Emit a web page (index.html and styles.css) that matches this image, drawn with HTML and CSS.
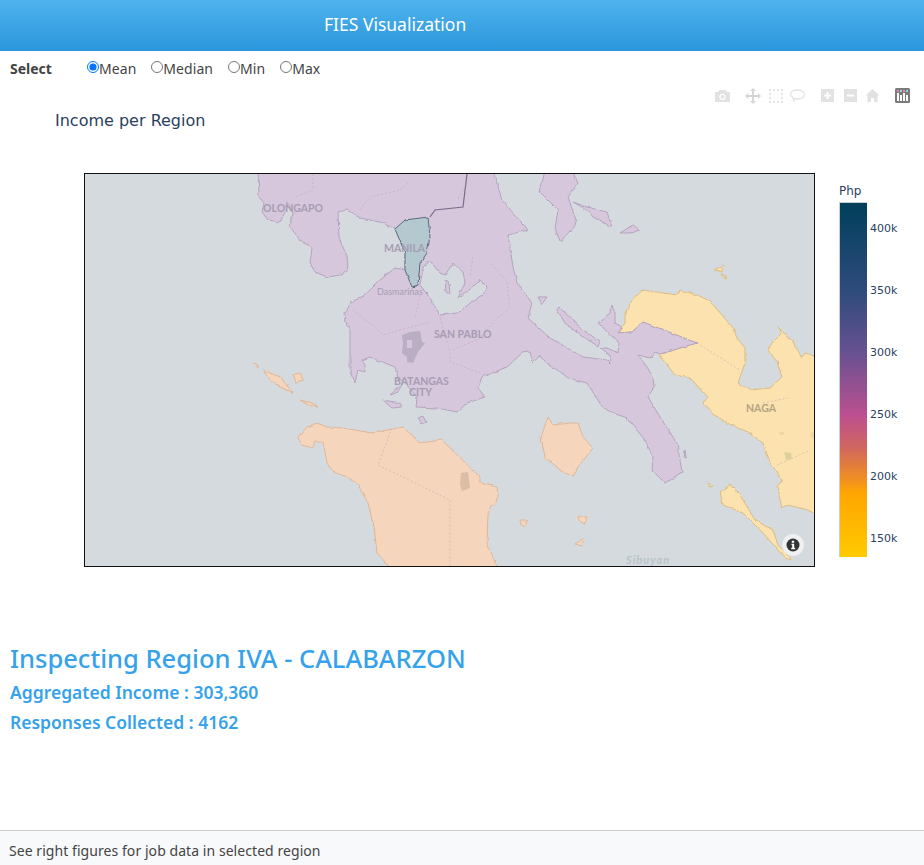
FILE: index.html
```html
<!DOCTYPE html>
<html>

<head>
    <meta charset="UTF-8">
    <title>FIES Visualization</title>
    <link rel="stylesheet" href="styles.css">
</head>

<body>
    <header class="topbar">
        <h1 class="topbar-title">FIES Visualization</h1>
    </header>

    <form class="selector">
        <span class="selector-label">Select</span>
        <div class="selector-options">
            <label><input type="radio" name="stat" checked>Mean</label>
            <label><input type="radio" name="stat">Median</label>
            <label><input type="radio" name="stat">Min</label>
            <label><input type="radio" name="stat">Max</label>
        </div>
    </form>

    <section class="chart">
        <!-- plotly style modebar -->
        <svg class="modebar" width="200" height="18" viewBox="712 87 200 18">
            <g fill="#e2e2e2">
                <path d="M715 92h3l1.500-2h6l1.500 2h3v10h-15z M722.500 93.500a3.300 3.300 0 1 0 .01 0z M722.500 95a1.900 1.900 0 1 1-.01 0z" fill-rule="evenodd"/>
                <path d="M753 88l3 3h-2v4h4v-2l3 3-3 3v-2h-4v4h2l-3 3-3-3h2v-4h-4v2l-3-3 3-3v2h4v-4h-2z" fill="#d6d6d6"/>
                <path d="M769 89h2v2h-2zM773 89h2v2h-2zM777 89h2v2h-2zM781 89h2v2h-2zM781 93h2v2h-2zM781 97h2v2h-2zM781 101h2v2h-2zM777 101h2v2h-2zM773 101h2v2h-2zM769 101h2v2h-2zM769 97h2v2h-2zM769 93h2v2h-2z"/>
                <path d="M821 89h13v13h-13z M826.500 92v2.500h-2.500v2h2.500v2.500h2v-2.500h2.500v-2h-2.500v-2.500z" fill-rule="evenodd"/>
                <path d="M844 89h13v13h-13z M847 94.500v2h7v-2z" fill-rule="evenodd"/>
                <path d="M872.500 89l7 6.500h-2v6.500h-3.500v-4h-3v4h-3.500v-6.500h-2z"/>
            </g>
            <path d="M797 90c4.500 0 7.500 2 7.500 4.500s-3 4.500-7.500 4.500c-1 0-2 0-2.500-.5l-.5 2.500-1.500-4c-1.500-.8-2-1.700-2-2.500 0-2.500 2.500-4.500 6.500-4.500z" fill="none" stroke="#e2e2e2" stroke-width="1.300"/>
            <rect x="895" y="88" width="15" height="15" rx="1.500" fill="#7b7b7b"/>
            <path d="M897 93h2v8h-2zM900 95h2v6h-2zM903 93h2v8h-2zM906 95h2v6h-2z" fill="#fff"/>
            <path d="M897 90h2v2h-2zM903 90h2v2h-2z" fill="#e77fb5"/>
            <path d="M900 90h2v2h-2zM906 90h2v2h-2z" fill="#8fd3d8"/>
        </svg>

        <h2 class="chart-title">Income per Region</h2>

        <div class="chart-body">
            <div class="map">
                <svg class="map-svg" width="729" height="392" viewBox="85 174 729 392">
                    <defs>
                        <!-- roughens the coast lines a bit -->
                        <filter id="coast" x="80" y="165" width="750" height="410" filterUnits="userSpaceOnUse" primitiveUnits="userSpaceOnUse">
                            <feTurbulence type="fractalNoise" baseFrequency="0.16" numOctaves="2" seed="4"/>
                            <feDisplacementMap in="SourceGraphic" scale="3" xChannelSelector="R" yChannelSelector="G"/>
                        </filter>
                    </defs>

                    <rect x="85" y="174" width="729" height="392" fill="#d4dadd"/>

                    <g class="regions">
                        <!-- regions: yellow -->
                        <g class="region region-yellow">
                            <path d="M618 333L625 323L625 313L632 300L643 290L663 293L678 295L680 290L697 295L710 301L733 328L737 338L745 348L745 363L738 383L750 390L770 388L782 377L777 362L768 350L772 343L782 333L777 325L788 338L792 340L802 358L805 353L820 358L820 517L808 510L788 505L782 508L777 487L782 480L770 462L763 443L748 432L727 423L712 413L703 403L708 397L690 378L675 375L663 360L660 354L697 343L643 322L632 332Z"/>
                            <path d="M720 492L730 485L740 495L755 520L773 530L778 545L792 560L785 558L763 533L743 513L723 505Z"/>
                            <path d="M715 270L723 265L722 272Z"/>
                            <path d="M720 273L727 277L725 279Z"/>
                            <path d="M708 482L713 486L710 487Z"/>
                        </g>

                        <!-- regions: purple -->
                        <g class="region region-purple">
                            <path fill-rule="evenodd" d="M258 170L259 197L264 203L262 212L268 220L280 222L285 212L287 202L292 210L293 213L290 227L300 240L312 248L310 263L315 272L327 277L342 275L348 267L347 257L339 237L338 212L347 210L360 218L380 222L395 229L405 253L405 270L395 268L380 280L363 297L350 302L348 310L344 312L345 323L350 327L350 372L355 383L358 370L365 372L365 365L362 360L370 357L395 367L398 378L405 383L417 397L416 407L437 408L457 412L467 403L485 397L478 388L482 377L507 367L522 353L530 352L533 363L540 355L548 365L558 370L568 378L587 383L603 408L613 413L627 418L645 440L653 457L652 470L665 483L682 472L677 443L660 417L648 397L654 387L653 377L647 367L638 355L650 358L655 352L660 354L697 343L643 322L632 332L618 333L622 327L615 323L615 310L612 305L610 313L598 323L619 343L618 353L607 348L600 348L611 357L610 363L607 360L583 357L550 338L528 318L532 303L517 283L513 267L508 235L528 230L502 200L493 170Z M420 285L423 268L429 260L440 273L445 275L453 263L463 272L465 283L458 297L472 288L480 280L487 287L483 295L468 305L457 313L440 315L430 298Z"/>
                            <path d="M445 280L449 283L450 295L446 292Z"/>
                            <path d="M540 192L545 170L572 170L578 183L568 197L577 223L560 242L555 228L558 210Z"/>
                            <path d="M573 202L587 207L607 212L612 227L593 217L587 210Z"/>
                            <path d="M620 233L633 225L640 230L630 233Z"/>
                            <path d="M557 310L559 307L580 327L600 342L598 346L580 335L565 323Z"/>
                            <path d="M538 297L547 297L542 304Z"/>
                            <path d="M390 395L403 383L397 393Z"/>
                            <path d="M383 400L400 403L402 407L392 408Z"/>
                            <path d="M418 418L423 416L426 422L422 424Z"/>
                            <path d="M685 450L686 458L684 457Z"/>
                        </g>

                        <!-- Metro Manila -->
                        <path class="region-teal" d="M395 229L405 220L428 217L430 237L427 253L420 263L418 285L412 287L405 270L405 253Z"/>

                        <!-- regions: orange -->
                        <g class="region region-orange">
                            <path d="M298 437L302 445L312 448L315 442L323 442L327 463L333 472L347 477L357 483L368 503L374 527L377 553L392 570L498 570L487 543L488 513L498 497L497 487L480 483L480 477L442 440L420 443L403 427L372 433L343 428L327 427L317 423L307 427Z"/>
                            <path d="M263 370L280 377L293 393L280 387L270 380Z"/>
                            <path d="M293 375L300 373L303 380L296 382Z"/>
                            <path d="M300 400L312 403L318 407L308 405Z"/>
                            <path d="M253 363L258 365L258 368Z"/>
                            <path d="M548 417L553 425L570 423L578 423L583 437L593 448L578 467L573 477L560 470L545 457L541 437Z"/>
                            <path d="M520 520L528 520L526 527L521 525Z"/>
                            <path d="M576 517L587 517L584 525Z"/>
                            <path d="M575 544L584 538L582 546Z"/>
                        </g>
                    </g>
                    <path class="map-border-line" d="M430 217L435 210L463 207L467 174"/>

                    <!-- roads, borders, lakes -->
                    <g class="map-lines">
                        <path d="M313 174L313 190L295 197M360 210L370 197L400 190L408 183M467 183L457 200"/>
                        <path d="M353 310L370 323L383 335L400 330L430 322M420 295L415 318M440 318L450 352L450 362L480 373"/>
                        <path d="M453 350L480 338L497 318L510 308L507 282L490 262M470 275L473 255"/>
                        <path d="M392 428L378 465L450 500L450 566"/>
                        <path d="M700 345L740 370M763 403L788 398M777 465L810 450"/>
                    </g>
                    <path class="lake-purple" fill-rule="evenodd" d="M402 335L410 332L420 331L422 342L425 343L418 352L413 363L407 362L407 357L402 353L403 343Z M407 340L412 340L412 348L407 348Z"/>
                    <path d="M461 473L468 472L470 488L462 491L460 484Z" fill="#dcbda6"/>
                    <path d="M784 452L791 453L792 459L786 460Z" fill="#e0d09c"/>
                    <path d="M779 432L784 432L784 435L780 435ZM810 433L814 431L814 438L811 438Z" fill="#eed8a6"/>

                    <!-- place labels -->
                    <g class="map-label">
                        <text x="263" y="212">OLONGAPO</text>
                        <text x="384" y="252">MANILA</text>
                        <text class="map-label-small" x="377" y="295">Dasmarinas</text>
                        <text x="434" y="338">SAN PABLO</text>
                        <text x="394" y="385">BATANGAS</text>
                        <text x="409" y="396">CITY</text>
                        <text class="map-label-naga" x="746" y="412">NAGA</text>
                        <text class="map-label-sea" x="626" y="564">Sibuyan</text>
                    </g>
                </svg>
                <span class="map-info">
                    <svg width="14" height="14" viewBox="0 0 14 14">
                        <circle cx="7" cy="7" r="6.500" fill="#333"/>
                        <path d="M5.800 2.800h2.400v2h-2.400zM5.500 5.800h2.700v4h1v1.400h-4v-1.400h1v-2.600h-.7z" fill="#fff"/>
                    </svg>
                </span>
            </div>

            <div class="colorbar">
                <div class="colorbar-title">Php</div>
                <div class="colorbar-body">
                    <div class="colorbar-ramp"></div>
                    <div class="colorbar-ticks">
                        <span>400k</span>
                        <span>350k</span>
                        <span>300k</span>
                        <span>250k</span>
                        <span>200k</span>
                        <span>150k</span>
                    </div>
                </div>
            </div>
        </div>
    </section>

    <section class="summary">
        <h2 class="summary-title">Inspecting Region IVA - CALABARZON</h2>
        <h3 class="summary-line">Aggregated Income : 303,360</h3>
        <h3 class="summary-line">Responses Collected : 4162</h3>
    </section>

    <footer class="footer">See right figures for job data in selected region</footer>
</body>

</html>
```

FILE: styles.css
```css
* {
    margin: 0;
    padding: 0;
    box-sizing: border-box;
}

body {
    display: flex;
    flex-direction: column;
    min-height: 865px;
    font-family: "Noto Sans", "Open Sans", sans-serif;
    font-size: 14px;
    color: #444;
    background-color: #fff;
}

.topbar {
    height: 51px;
    padding-left: 324px;
    background: linear-gradient(#4fb3ed, #2a96dc);
}

.topbar-title {
    font-size: 17.500px;
    font-weight: 400;
    line-height: 48px;
    color: #fff;
}

.selector {
    display: flex;
    align-items: center;
    height: 36px;
    padding: 0 0 2px 10px;
}

.selector-label {
    width: 77px;
    font-weight: 700;
}

.selector-options {
    display: flex;
    gap: 15px;
    letter-spacing: 0.06px;
}

.selector-options label {
    display: flex;
    align-items: center;
}

.selector-options input {
    width: 12px;
    height: 12px;
    margin: 0 0 2px 0;
}

.chart {
    position: relative;
    height: 513px;
}

.modebar {
    position: absolute;
    top: 0;
    left: 712px;
}

.chart-title {
    padding: 24px 0 0 55px;
    height: 86px;
    font-family: "DejaVu Sans", sans-serif;
    font-size: 16px;
    font-weight: 400;
    line-height: 20px;
    color: #2a3f5f;
}

.chart-body {
    display: flex;
    padding-left: 84px;
}

.map {
    position: relative;
    width: 731px;
    height: 394px;
    border: 1px solid #111;
}

.map-svg {
    display: block;
}

.regions {
    filter: url(#coast);
}

.region path,
.region-teal {
    stroke-width: 1;
    stroke-linejoin: round;
}

.region-purple path {
    fill: #d6c7dc;
    stroke: #b5a3bf;
}

.region-teal {
    fill: #b3c8cf;
    stroke: #5b6a80;
}

.region-yellow path {
    fill: #fce2ae;
    stroke: #dcbc80;
}

.region-orange path {
    fill: #f5d6bd;
    stroke: #dfb698;
}

.map-border-line {
    fill: none;
    stroke: #7c6a8a;
    stroke-width: 1.200;
}

.map-lines path {
    fill: none;
    stroke: #c9a0b4;
    stroke-width: 1;
    stroke-dasharray: 2 2;
    opacity: 0.55;
}

.lake-purple {
    fill: #baaec4;
}

.map-label text {
    font-family: "Lato", sans-serif;
    font-size: 10.500px;
    font-weight: 700;
    fill: #a79cb4;
}

.map-label .map-label-small {
    font-size: 9px;
    font-weight: 400;
}

.map-label .map-label-naga {
    fill: #b3a583;
}

.map-label .map-label-sea {
    font-size: 11px;
    font-style: italic;
    letter-spacing: 1px;
    fill: #b9c4ca;
}

.map-info {
    position: absolute;
    right: 10px;
    bottom: 10px;
    display: flex;
    align-items: center;
    justify-content: center;
    width: 22px;
    height: 22px;
    border-radius: 50%;
    background-color: #eef0f1;
}

.colorbar {
    margin-left: 24px;
    font-family: "DejaVu Sans", sans-serif;
    color: #2a3f5f;
}

.colorbar-title {
    height: 29px;
    padding-top: 10px;
    font-size: 12px;
    line-height: 16px;
}

.colorbar-body {
    display: flex;
    height: 355px;
}

.colorbar-ramp {
    width: 28px;
    background: linear-gradient(#003f5c 0%, #2f4b7c 25%, #665191 42%, #bc5090 60%, #d0665f 69%, #f08f22 78%, #ffa600 82%, #ffca00 100%);
    border-top: 1px solid #c4d0d6;
    border-left: 1px solid #c4d0d6;
}

.colorbar-ticks {
    display: flex;
    flex-direction: column;
    justify-content: space-between;
    padding: 20px 0 11px 3px;
    font-size: 11px;
    line-height: 14px;
}

.summary {
    padding: 41px 10px 0;
    color: #35a2ea;
}

.summary-title {
    font-size: 25.500px;
    font-weight: 500;
    line-height: 34px;
    margin-bottom: 2px;
}

.summary-line {
    font-size: 17.500px;
    font-weight: 600;
    line-height: 30px;
}

.footer {
    margin-top: auto;
    height: 35px;
    padding-left: 9px;
    line-height: 39px;
    letter-spacing: 0.06px;
    overflow: hidden;
    background-color: #f8f9fa;
    border-top: 1px solid #ccc;
}
```
